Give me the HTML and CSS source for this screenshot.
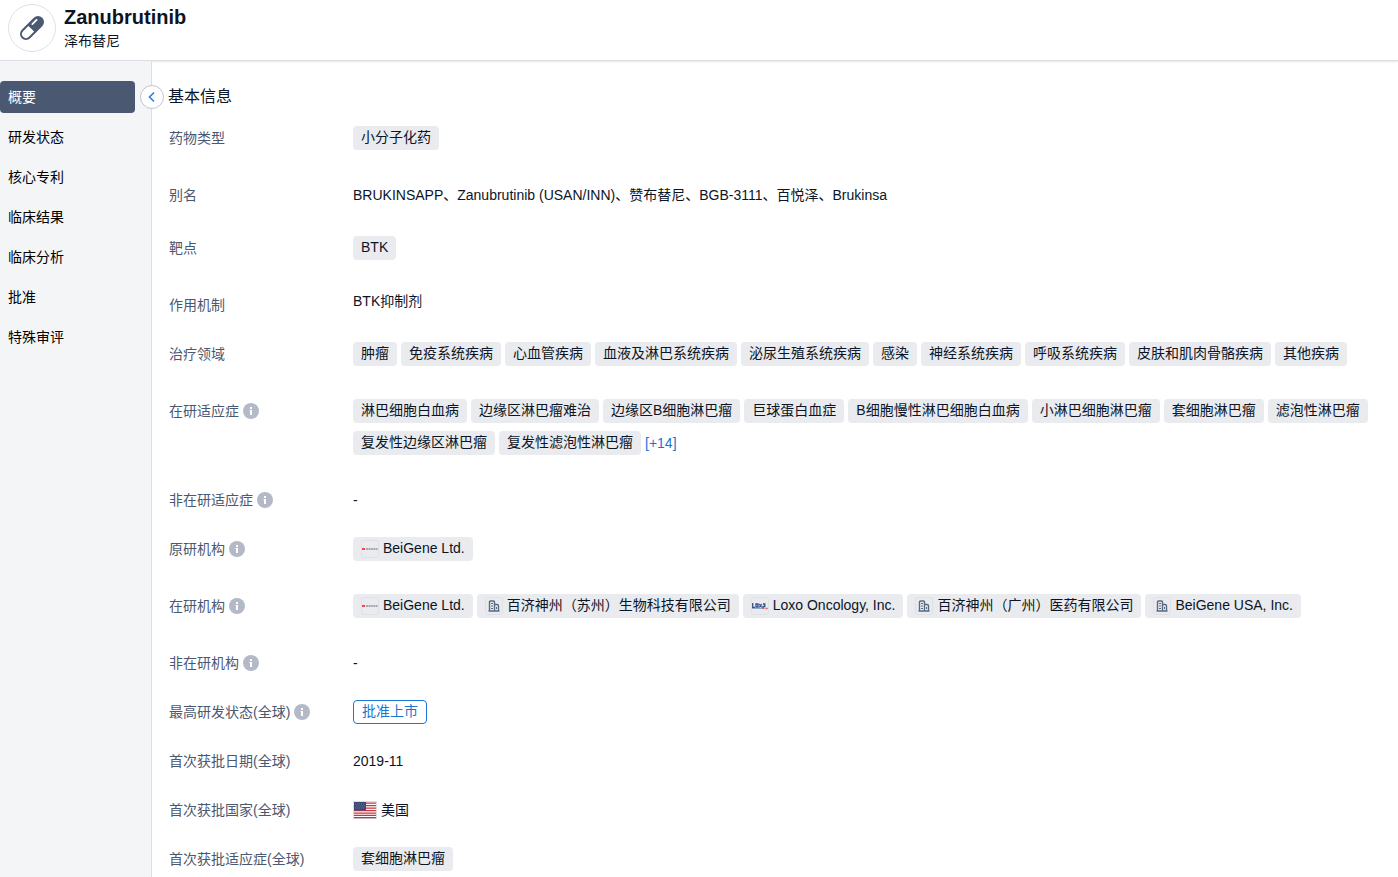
FILE: index.html
```html
<!DOCTYPE html>
<html lang="zh-CN">
<head>
  <meta charset="UTF-8" />
  <meta name="viewport" content="width=device-width, initial-scale=1.0"/>
  <title>Zanubrutinib</title>
  <link rel="stylesheet" href="styles.css">
</head>
<body>

  <!-- Shared icons -->
  <svg class="sprite" aria-hidden="true">
    <symbol id="icon-info" viewBox="0 0 16 16">
      <circle cx="8" cy="8" r="8" fill="#b3b9c7"/>
      <path d="M7 4h2v2H7zM7 7h2v5H7z" fill="#fff"/>
      <path d="M6 7h1v1H6z" fill="#fff" opacity=".5"/>
    </symbol>
    <symbol id="icon-company" viewBox="0 0 16 16">
      <path d="M3.500 13V4q0-1 1-1h3q1 0 1 1v9M8.500 6.500h2.500q1.500 0 1.500 1.500V13M2.500 13h11" fill="none" stroke="#5a6983" stroke-width="1.400"/>
      <path d="M5 5.500h2M5 8h2M5 10.500h2M10.500 9v2" stroke="#5a6983" stroke-width="1"/>
    </symbol>
    <symbol id="icon-beigene" viewBox="0 0 16 16">
      <path d="M0 7h3v2H0z" fill="#f2444b"/>
      <path d="M4 8h12" stroke="#8f96a3" stroke-width="1.500" stroke-dasharray="2 .4"/>
    </symbol>
    <symbol id="icon-loxo" viewBox="0 0 16 16">
      <path d="M.7 5v4.300h2.300M4 6h2v3H4zM7.300 6l2.400 3.500M9.700 6L7.300 9.500M11 6h1.800v2.500H11V11" fill="none" stroke="#34508c" stroke-width="1.300"/>
      <path d="M0 10.500h10" stroke="#9aa7c4" stroke-width="1"/>
      <path d="M12.500 10.500H16" stroke="#f08080" stroke-width="1.500"/>
    </symbol>
  </svg>

  <header class="header">
    <div class="avatar">
      <svg width="32" height="32" viewBox="0 0 32 32">
        <g transform="rotate(-45 16 16)">
          <rect x="1.500" y="10" width="29" height="12" rx="6" fill="#4a5a75"/>
          <path d="M15 12H7.500a4 4 0 0 0 0 8H15z" fill="#fff"/>
          <path d="M19 13.500h6" stroke="#fff" stroke-width="1.800" stroke-linecap="round"/>
        </g>
      </svg>
    </div>
    <div>
      <h1>Zanubrutinib</h1>
      <p class="subtitle">泽布替尼</p>
    </div>
  </header>

  <div class="layout">
    <nav class="sidebar">
      <a href="#" class="active">概要</a>
      <a href="#">研发状态</a>
      <a href="#">核心专利</a>
      <a href="#">临床结果</a>
      <a href="#">临床分析</a>
      <a href="#">批准</a>
      <a href="#">特殊审评</a>
      <button class="collapse" aria-label="收起">
        <svg width="12" height="12" viewBox="0 0 12 12"><path d="M8 1.500L3.500 6 8 10.500" fill="none" stroke="#2a80dc" stroke-width="1.600"/></svg>
      </button>
    </nav>

    <main class="content">
      <h2>基本信息</h2>
      <dl>
        <div class="row tagged">
          <dt>药物类型</dt>
          <dd><span class="tag">小分子化药</span></dd>
        </div>
        <div class="row alias">
          <dt>别名</dt>
          <dd>BRUKINSAPP、Zanubrutinib (USAN/INN)、赞布替尼、BGB-3111、百悦泽、Brukinsa</dd>
        </div>
        <div class="row tagged">
          <dt>靶点</dt>
          <dd><span class="tag">BTK</span></dd>
        </div>
        <div class="row">
          <dt>作用机制</dt>
          <dd class="mechanism">BTK抑制剂</dd>
        </div>
        <div class="row tagged">
          <dt>治疗领域</dt>
          <dd>
            <span class="tag">肿瘤</span>
            <span class="tag">免疫系统疾病</span>
            <span class="tag">心血管疾病</span>
            <span class="tag">血液及淋巴系统疾病</span>
            <span class="tag">泌尿生殖系统疾病</span>
            <span class="tag">感染</span>
            <span class="tag">神经系统疾病</span>
            <span class="tag">呼吸系统疾病</span>
            <span class="tag">皮肤和肌肉骨骼疾病</span>
            <span class="tag">其他疾病</span>
          </dd>
        </div>
        <div class="row tagged">
          <dt>在研适应症 <svg class="info"><use href="#icon-info"/></svg></dt>
          <dd>
            <span class="tag">淋巴细胞白血病</span>
            <span class="tag">边缘区淋巴瘤难治</span>
            <span class="tag">边缘区B细胞淋巴瘤</span>
            <span class="tag">巨球蛋白血症</span>
            <span class="tag">B细胞慢性淋巴细胞白血病</span>
            <span class="tag">小淋巴细胞淋巴瘤</span>
            <span class="tag">套细胞淋巴瘤</span>
            <span class="tag">滤泡性淋巴瘤</span>
            <span class="tag">复发性边缘区淋巴瘤</span>
            <span class="tag">复发性滤泡性淋巴瘤</span>
            <a href="#" class="more">[+14]</a>
          </dd>
        </div>
        <div class="row">
          <dt>非在研适应症 <svg class="info"><use href="#icon-info"/></svg></dt>
          <dd>-</dd>
        </div>
        <div class="row tagged">
          <dt>原研机构 <svg class="info"><use href="#icon-info"/></svg></dt>
          <dd><span class="tag"><svg class="logo"><use href="#icon-beigene"/></svg>BeiGene Ltd.</span></dd>
        </div>
        <div class="row tagged">
          <dt>在研机构 <svg class="info"><use href="#icon-info"/></svg></dt>
          <dd>
            <span class="tag"><svg class="logo"><use href="#icon-beigene"/></svg>BeiGene Ltd.</span>
            <span class="tag"><svg class="logo"><use href="#icon-company"/></svg>百济神州（苏州）生物科技有限公司</span>
            <span class="tag"><svg class="logo"><use href="#icon-loxo"/></svg>Loxo Oncology, Inc.</span>
            <span class="tag"><svg class="logo"><use href="#icon-company"/></svg>百济神州（广州）医药有限公司</span>
            <span class="tag"><svg class="logo"><use href="#icon-company"/></svg>BeiGene USA, Inc.</span>
          </dd>
        </div>
        <div class="row">
          <dt>非在研机构 <svg class="info"><use href="#icon-info"/></svg></dt>
          <dd>-</dd>
        </div>
        <div class="row">
          <dt>最高研发状态(全球) <svg class="info"><use href="#icon-info"/></svg></dt>
          <dd><span class="tag status">批准上市</span></dd>
        </div>
        <div class="row">
          <dt>首次获批日期(全球)</dt>
          <dd>2019-11</dd>
        </div>
        <div class="row">
          <dt>首次获批国家(全球)</dt>
          <dd>
            <svg class="flag" viewBox="0 0 24 18">
              <rect width="24" height="18" fill="#dcdde0"/>
              <rect x="1" y="1" width="22" height="16" fill="#fff"/>
              <path d="M1 2h22M1 4.500h22M1 7h22M1 9.500h22M1 12h22M1 14.300h22M1 16.500h22" stroke="#c8353f" stroke-width="1.250"/>
              <rect x="1" y="1" width="12" height="8.500" fill="#3c4a78"/>
              <path d="M2 3h10M3 5h9M2 7h10" stroke="#7c87a8" stroke-width=".6" stroke-dasharray="1 1"/>
            </svg>
            美国
          </dd>
        </div>
        <div class="row">
          <dt>首次获批适应症(全球)</dt>
          <dd><span class="tag">套细胞淋巴瘤</span></dd>
        </div>
      </dl>
    </main>
  </div>

</body>
</html>
```
FILE: styles.css
```css
* { box-sizing: border-box; }
body {
  margin: 0;
  font-family: "Liberation Sans", "Noto Sans CJK SC", sans-serif;
  font-size: 14px; line-height: 24px; color: #0b1526;
  background: #fff;
}
h1, h2, p, dl, dd { margin: 0; }
a { text-decoration: none; }
.sprite { display: none; }

/* Header */
.header {
  display: flex; gap: 8px;
  height: 61px; padding: 4px 8px;
  border-bottom: 1px solid #dcdee3;
  box-shadow: 0 1px 2px rgba(0, 0, 0, 0.1);
}
.avatar {
  display: flex; align-items: center; justify-content: center;
  width: 48px; height: 48px;
  border: 1px solid #e0e1e8; border-radius: 50%;
}
h1 { font-size: 20px; line-height: 26px; }
.subtitle { line-height: 22px; }

/* Sidebar */
.layout { display: flex; min-height: calc(100vh - 61px); }
.sidebar {
  position: relative;
  display: flex; flex-direction: column; gap: 8px;
  width: 152px; padding: 20px 16px 0 0;
  border-right: 1px solid #dcdee3;
  background: #f4f5f7;
}
.sidebar a {
  padding: 4px 8px;
  border-radius: 4px;
  color: #000;
}
.sidebar a.active { background: #4a5872; color: #fff; }
.collapse {
  position: absolute; top: 24px; right: -13px;
  display: flex; align-items: center; justify-content: center;
  width: 24px; height: 24px; padding: 0;
  border: 1px solid #bfc4d0; border-radius: 50%;
  background: #fff; cursor: pointer;
}

/* Basic info */
.content { flex: 1; min-width: 0; padding: 24px 16px 0; }
h2 { margin-bottom: 17px; font-size: 16px; font-weight: normal; }
.row { display: flex; margin-bottom: 25px; padding-left: 1px; }
.row.tagged { margin-bottom: 33px; }
.row.alias { margin-bottom: 29px; }
dt {
  display: flex; align-items: center; gap: 4px;
  flex: none; width: 184px; height: 24px;
  color: #4a5872;
}
dd { display: flex; flex-wrap: wrap; align-items: center; gap: 8px 4px; flex: 1; }
.mechanism { height: 16px; line-height: 16px; }
.tag {
  display: flex; align-items: center; gap: 4px;
  height: 24px; padding: 0 8px 2px;
  border-radius: 4px;
  background: #eaebef;
  line-height: 22px;
}
.tag.status { border: 1px solid #1976d2; background: #fff; color: #1976d2; }
.more { color: #1976d2; }
.info { width: 16px; height: 16px; }
.logo {
  width: 18px; height: 18px; margin-top: 2px;
  border: 1px solid #dfe1e6; border-radius: 3px;
}
.flag { width: 24px; height: 18px; }
```
